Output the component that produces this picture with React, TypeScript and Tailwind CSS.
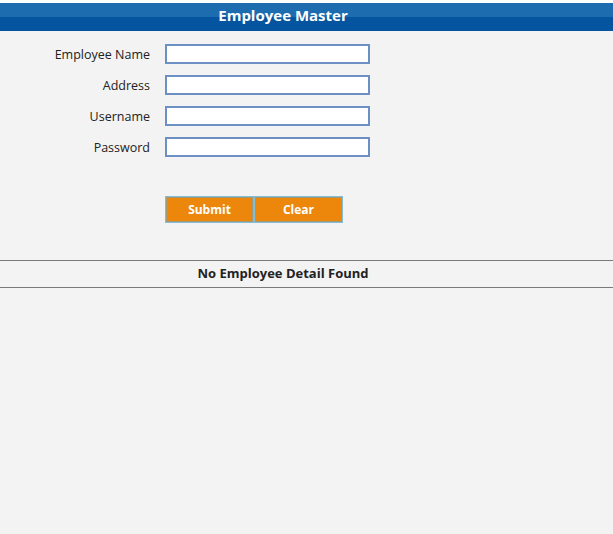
import React, { useState } from 'react';

const fields = [
  { key: 'name', label: 'Employee Name', type: 'text' },
  { key: 'address', label: 'Address', type: 'text' },
  { key: 'username', label: 'Username', type: 'text' },
  { key: 'password', label: 'Password', type: 'password' },
];

const App: React.FC = () => {
  const [values, setValues] = useState<Record<string, string>>({});

  const handleClear = () => setValues({});

  return (
    <div className="min-h-[534px] bg-[#f3f3f3] font-['Open_Sans',sans-serif] text-[#222]">
      <div className="h-[3px] bg-white" />
      <div className="h-[28px] flex flex-col">
        <div className="flex-1 bg-[#1e6cb0]" />
        <div className="flex-1 bg-[#0454a0]" />
      </div>
      <div className="-mt-[28px] h-[28px] pb-[3px] w-[566px] relative flex items-center justify-center text-white font-bold text-[15px]">
        Employee Master
      </div>

      <div className="pt-[13px] grid grid-cols-[150px_205px] gap-x-[15px] gap-y-[11px] items-center">
        {fields.map((f) => (
          <React.Fragment key={f.key}>
            <label className="text-right text-[12.5px] leading-[20px] translate-y-[1px]">{f.label}</label>
            <input
              type={f.type}
              value={values[f.key] ?? ''}
              onChange={(e) => setValues({ ...values, [f.key]: e.target.value })}
              className="h-[20px] w-[205px] bg-white border-2 border-[#6d90c4] outline-none px-1 text-[13px]"
            />
          </React.Fragment>
        ))}
      </div>

      <div className="pl-[165px] pt-[39px] flex">
        <button className="w-[89px] h-[27px] bg-[#ed870c] border border-[#84bcd6] shadow-[inset_0_0_0_1px_#a09a78] text-white font-bold text-[12px]">
          Submit
        </button>
        <button
          onClick={handleClear}
          className="w-[89px] h-[27px] bg-[#ed870c] border border-[#84bcd6] shadow-[inset_0_0_0_1px_#a09a78] text-white font-bold text-[12px]"
        >
          Clear
        </button>
      </div>

      <div className="mt-[37px] border-t border-b border-[#7a7a7a] h-[28px] flex items-center">
        <div className="w-[566px] text-center font-bold text-[13px]">No Employee Detail Found</div>
      </div>
    </div>
  );
};

export default App;
